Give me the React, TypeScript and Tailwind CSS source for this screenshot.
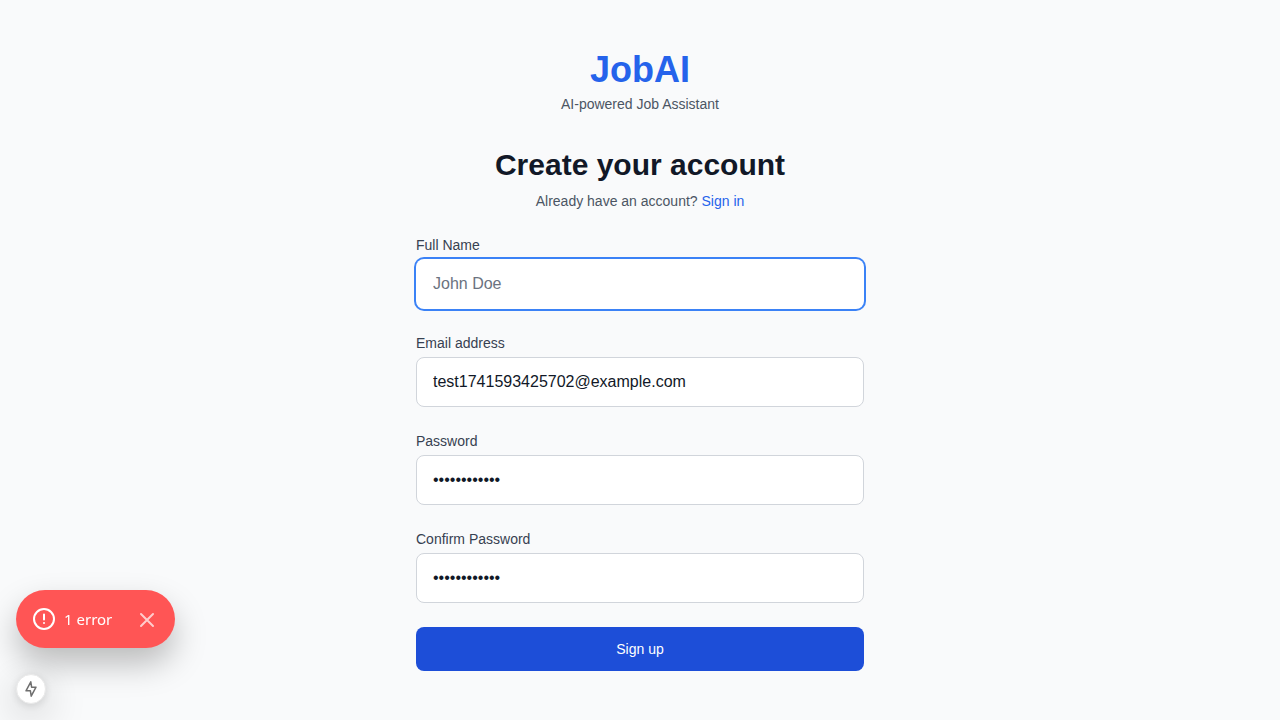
import React from "react";

type FieldProps = {
  id: string;
  label: string;
  type: string;
  placeholder?: string;
  defaultValue?: string;
  autoFocus?: boolean;
};

function Field({ id, label, ...input }: FieldProps) {
  return (
    <div className="flex flex-col gap-1">
      <label htmlFor={id} className="text-sm text-[#374151]">
        {label}
      </label>
      <input
        id={id}
        name={id}
        {...input}
        className="w-full rounded-lg border border-[#d1d5db] bg-white px-4 py-3 text-base text-[#111827] caret-transparent outline-none placeholder:text-[#6b7280] focus:border-transparent focus:ring-2 focus:ring-[#3b82f6]"
      />
    </div>
  );
}

function ErrorToast() {
  return (
    <div className="flex items-center rounded-full bg-[#ff5555] px-4 py-[17px] font-['Noto_Sans',sans-serif] text-white shadow-[0_16px_32px_rgba(0,0,0,0.25)]">
      <button type="button" className="flex items-center gap-2 text-[15px] leading-6">
        <svg width="24" height="24" viewBox="0 0 24 24" fill="none" stroke="currentColor" strokeWidth="2" strokeLinecap="round" aria-hidden="true">
          <circle cx="12" cy="12" r="10" />
          <path d="M12 7.5v5M12 16h.01" />
        </svg>
        1 error
      </button>
      <button type="button" aria-label="Close" className="ml-[23px] opacity-70">
        <svg width="24" height="24" viewBox="0 0 24 24" fill="none" stroke="currentColor" strokeWidth="2" strokeLinecap="round" aria-hidden="true">
          <path d="M18 7 6 19M6 7l12 12" />
        </svg>
      </button>
    </div>
  );
}

export default function App() {
  return (
    <div className="min-h-screen bg-[#f9fafb] px-4 pt-[50px] pb-12 font-['Liberation_Sans',Arial,sans-serif]">
      <main className="mx-auto flex w-full max-w-md flex-col">
        <header className="text-center">
          <h1 className="text-4xl font-bold text-[#2563eb]">JobAI</h1>
          <p className="mt-1 text-sm text-[#4b5563]">AI-powered Job Assistant</p>
          <h2 className="mt-[33px] text-3xl font-bold text-[#111827]">Create your account</h2>
          <p className="mt-2 text-sm text-[#4b5563]">
            Already have an account?{" "}
            <a href="#signin" className="text-[#2563eb]">
              Sign in
            </a>
          </p>
        </header>
        <form className="mt-6 flex flex-col gap-6">
          <Field id="name" label="Full Name" type="text" placeholder="John Doe" autoFocus />
          <Field id="email" label="Email address" type="email" defaultValue="test1741593425702@example.com" />
          <Field id="password" label="Password" type="password" defaultValue="Password123!" />
          <Field id="confirm" label="Confirm Password" type="password" defaultValue="Password123!" />
          <button type="button" className="w-full rounded-lg bg-[#1d4ed8] px-4 py-3 text-sm text-white">
            Sign up
          </button>
        </form>
      </main>
      <aside className="fixed bottom-4 left-4 flex flex-col items-start gap-[26px]">
        <ErrorToast />
        <button
          type="button"
          aria-label="Static route"
          className="flex size-[30px] items-center justify-center rounded-full border border-[#e8e8e8] bg-white shadow-[0_11px_40px_rgba(0,0,0,0.25),0_2px_10px_rgba(0,0,0,0.12)]"
        >
          <svg width="16" height="18" viewBox="0 0 16 18" fill="none" stroke="#6f6f6f" strokeWidth="1.5" strokeLinejoin="round" aria-hidden="true">
            <path d="M7.8 1.8 3 10.8H7.4L8.2 16.2 13 7.2H8.6z" />
          </svg>
        </button>
      </aside>
    </div>
  );
}
